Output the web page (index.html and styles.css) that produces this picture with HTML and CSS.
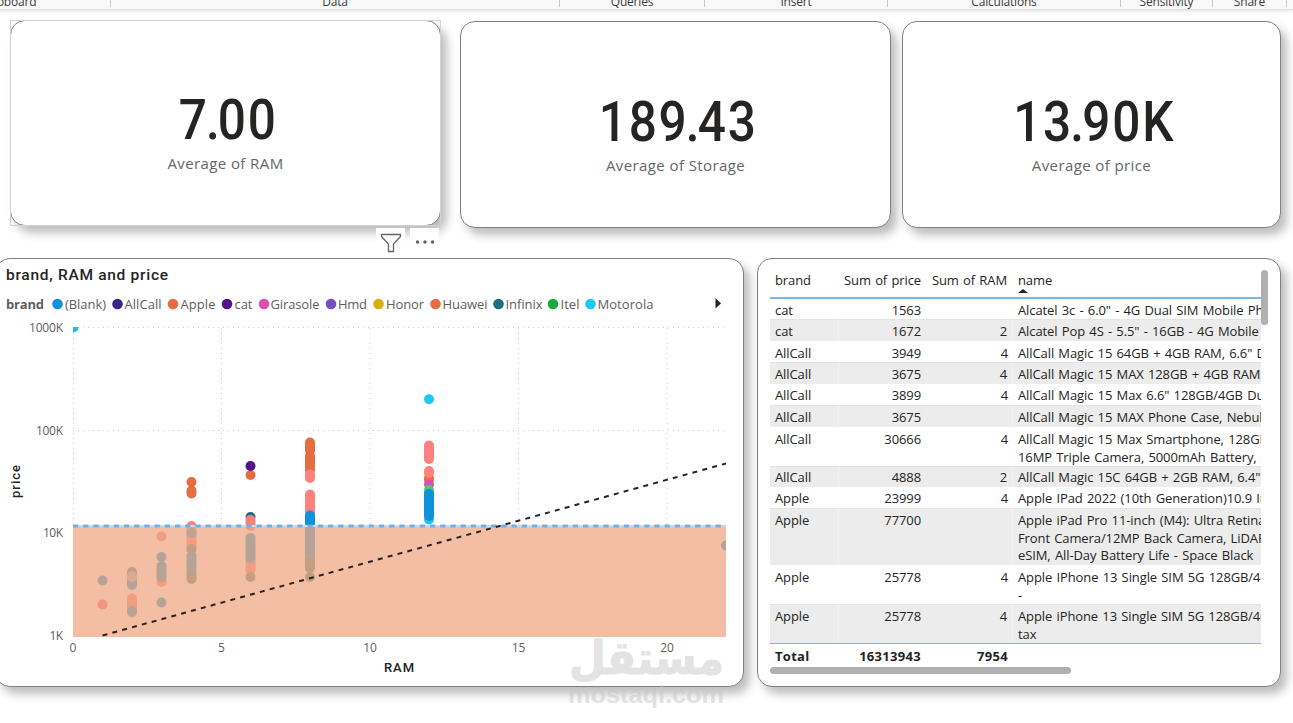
FILE: index.html
```html
<!doctype html>
<html lang="en">
<head>
<meta charset="utf-8">
<link rel="stylesheet" href="styles.css">
<title>Phones report</title>
</head>

<body>

<div class="ribbon">
	<div class="group clipboard">Clipboard</div>
	<div class="group data">Data</div>
	<div class="group queries">Queries</div>
	<div class="group insert">Insert</div>
	<div class="group calc">Calculations</div>
	<div class="group sens">Sensitivity</div>
	<div class="group share">Share</div>
</div>

<div class="cards">
	<div class="card selected">
		<div class="value">7<span class="dot">.</span>00</div>
		<div class="label">Average of RAM</div>
		<div class="tools">
			<span class="tool"><svg width="22" height="20" viewBox="0 0 22 20"><path d="M1.500 1.500h19v2l-7 7.500v7.500h-5v-7.500l-7-7.500z" fill="none" stroke="#666" stroke-width="1.300"/></svg></span>
			<span class="tool"><svg width="20" height="20" viewBox="0 0 20 20" fill="#605e5c"><circle cx="2.500" cy="9" r="1.700"/><circle cx="10" cy="9" r="1.700"/><circle cx="17.500" cy="9" r="1.700"/></svg></span>
		</div>
	</div>
	<div class="card storage">
		<div class="value">189<span class="dot">.</span>43</div>
		<div class="label">Average of Storage</div>
	</div>
	<div class="card price">
		<div class="value">13<span class="dot">.</span>90K</div>
		<div class="label">Average of price</div>
	</div>
</div>

<div class="visuals">
	<div class="panel chart">
		<svg width="744" height="427" viewBox="0 259 744 427">
			<defs>
				<clipPath id="upper"><rect x="73" y="327" width="653" height="198"/></clipPath>
				<clipPath id="lower"><rect x="73" y="527" width="653" height="110"/></clipPath>
			</defs>
			<text class="title" x="6" y="280" textLength="162">brand, RAM and price</text>
			<g class="legend">
				<text class="bold" x="6" y="309" textLength="38">brand</text>
				<circle cx="57.500" cy="304" r="5.300" fill="#0f91dc"/><text x="65" y="309" textLength="41">(Blank)</text>
				<circle cx="117.500" cy="304" r="5.300" fill="#3b2587"/><text x="124.500" y="309" textLength="37">AllCall</text>
				<circle cx="173" cy="304" r="5.300" fill="#e66c42"/><text x="180.500" y="309" textLength="35">Apple</text>
				<circle cx="227" cy="304" r="5.300" fill="#53138a"/><text x="234.500" y="309" textLength="18">cat</text>
				<circle cx="264" cy="304" r="5.300" fill="#d951b0"/><text x="270.500" y="309" textLength="49">Girasole</text>
				<circle cx="331" cy="304" r="5.300" fill="#7350be"/><text x="338" y="309" textLength="29">Hmd</text>
				<circle cx="378.500" cy="304" r="5.300" fill="#d9b109"/><text x="386" y="309" textLength="38">Honor</text>
				<circle cx="435.500" cy="304" r="5.300" fill="#e66c42"/><text x="442.500" y="309" textLength="45">Huawei</text>
				<circle cx="498.500" cy="304" r="5.300" fill="#1f6f7a"/><text x="505.500" y="309" textLength="37">Infinix</text>
				<circle cx="553" cy="304" r="5.300" fill="#1aab40"/><text x="560.500" y="309" textLength="19">Itel</text>
				<circle cx="590.500" cy="304" r="5.300" fill="#22c7f1"/><text x="597.500" y="309" textLength="56">Motorola</text>
			</g>
			<path d="M715.500 298l5.500 5.500-5.500 5z" fill="#252423"/>

			<g class="grid">
				<path d="M73 327.500h653M73 430.500h653M73 533.500h653M73 636h653"/>
				<path d="M73.500 328v308M221.500 328v308M370 328v308M518.500 328v308M667 328v308"/>
			</g>
			<rect x="73" y="526" width="653" height="111" fill="#f3b89c" fill-opacity=".92"/>

			<!-- close points are drawn as one round line -->
			<g class="dots" clip-path="url(#upper)">
				<path d="M73.500 327.500v0" stroke="#22c1d8"/>
				<path d="M191.500 482v0M191.500 490.500v3" stroke="#e66c42"/>
				<path d="M191.500 526v0" stroke="#fd817e"/>
				<path d="M250.500 475v0" stroke="#e66c42"/>
				<path d="M250.500 466v0" stroke="#53138a"/>
				<path d="M250.500 517v0" stroke="#1f6f7a"/>
				<path d="M250.500 520v8" stroke="#fd817e"/>
				<path d="M310 442.500v8M310 456v14M310 462v0" stroke="#e66c42"/>
				<path d="M310 474.500v3.500M310 494.500v20" stroke="#fd817e"/>
				<path d="M310 524v4" stroke="#40bb68"/>
				<path d="M310 515.500v6" stroke="#0f91dc"/>
				<path d="M429 399.300v0" stroke="#22c7f1"/>
				<path d="M429 445.500v13.500" stroke="#fd817e"/>
				<path d="M429 478v2" stroke="#e66c42"/>
				<path d="M429 471v2" stroke="#fd817e"/>
				<path d="M429 484.500v0" stroke="#d951b0"/>
				<path d="M429 490v5" stroke="#50c878"/>
				<path d="M429 519.500v0" stroke="#22c7f1"/>
				<path d="M429 494v22" stroke="#0f91dc"/>
			</g>
			<g class="dots" clip-path="url(#lower)">
				<path d="M102.500 580.500v0" stroke="#b5a398"/>
				<path d="M102.500 604.500v0" stroke="#f29580"/>
				<path d="M132 572v0" stroke="#c49d82"/>
				<path d="M132 580v5" stroke="#b5a398"/>
				<path d="M132 576v1" stroke="#d9aa97"/>
				<path d="M132 598.500v14" stroke="#f09d82"/>
				<path d="M132 611v0.500" stroke="#b5a398"/>
				<path d="M161.500 536.500v0M161.500 582v0" stroke="#f09d82"/>
				<path d="M161.500 577v0" stroke="#c49d82"/>
				<path d="M161.500 557v0M161.500 566v9M161.500 602.500v0" stroke="#b5a398"/>
				<path d="M191.500 526v20" stroke="#f09d82"/>
				<path d="M191.500 549v0M191.500 573v6" stroke="#c49d82"/>
				<path d="M191.500 533v0" stroke="#c0a294"/>
				<path d="M191.500 556v13" stroke="#b5a398"/>
				<path d="M250.500 526v0M250.500 560v10" stroke="#f09d82"/>
				<path d="M250.500 577v0" stroke="#c49d82"/>
				<path d="M250.500 538v20" stroke="#b5a398"/>
				<path d="M310 558v10M310 577v0" stroke="#c49d82"/>
				<path d="M310 526v28" stroke="#b5a398"/>
				<path d="M726 545.500v0" stroke="#b5a398"/>
			</g>
			<path d="M73 526h653" stroke="#c9d9e6" stroke-width="2"/>
			<path d="M73 526h653" stroke="#71afea" stroke-width="3" stroke-dasharray="5.200 5"/>
			<path d="M102.500 635.500L726 463.500" stroke="#252423" stroke-width="2" stroke-dasharray="5 5.200"/>

			<g class="axis">
				<text x="29" y="332" textLength="34">1000K</text>
				<text x="36" y="435" textLength="27">100K</text>
				<text x="43" y="537" textLength="20">10K</text>
				<text x="49.500" y="640" textLength="13.500">1K</text>
				<g text-anchor="middle">
					<text x="73" y="652">0</text>
					<text x="221.500" y="652">5</text>
					<text x="370" y="652">10</text>
					<text x="518.500" y="652">15</text>
					<text x="667" y="652">20</text>
				</g>
			</g>
			<text class="axis-title" x="384" y="672" textLength="30">RAM</text>
			<text class="axis-title" x="-498" y="20" textLength="33" transform="rotate(-90)">price</text>
		</svg>
	</div>

	<div class="panel list">
		<div class="scroller">
			<table>
				<thead>
					<tr><th class="brand">brand</th><th class="num">Sum of price</th><th class="num ram">Sum of RAM</th><th class="name">name<i class="sort"></i></th></tr>
				</thead>
				<tbody>
					<tr class="first"><td>cat</td><td>1563</td><td></td><td>Alcatel 3c - 6.0" - 4G Dual SIM Mobile Phone</td></tr>
					<tr class="tall"><td>cat</td><td>1672</td><td>2</td><td>Alcatel Pop 4S - 5.5" - 16GB - 4G Mobile Phone</td></tr>
					<tr class="low"><td>AllCall</td><td>3949</td><td>4</td><td>AllCall Magic 15 64GB + 4GB RAM, 6.6" Display</td></tr>
					<tr class="tall"><td>AllCall</td><td>3675</td><td>4</td><td>AllCall Magic 15 MAX 128GB + 4GB RAM</td></tr>
					<tr><td>AllCall</td><td>3899</td><td>4</td><td>AllCall Magic 15 Max 6.6" 128GB/4GB Dual</td></tr>
					<tr class="tall"><td>AllCall</td><td>3675</td><td></td><td>AllCall Magic 15 MAX Phone Case, Nebula</td></tr>
					<tr class="two low"><td>AllCall</td><td>30666</td><td>4</td><td>AllCall Magic 15 Max Smartphone, 128GB<br>16MP Triple Camera, 5000mAh Battery, And</td></tr>
					<tr class="high"><td>AllCall</td><td>4888</td><td>2</td><td>AllCall Magic 15C 64GB + 2GB RAM, 6.4" HD</td></tr>
					<tr><td>Apple</td><td>23999</td><td>4</td><td>Apple IPad 2022 (10th Generation)10.9 Inch</td></tr>
					<tr class="three"><td>Apple</td><td>77700</td><td></td><td>Apple iPad Pro 11-inch (M4): Ultra Retina<br>Front Camera/12MP Back Camera, LiDAR<br>eSIM, All-Day Battery Life - Space Black</td></tr>
					<tr class="two lower"><td>Apple</td><td>25778</td><td>4</td><td>Apple IPhone 13 Single SIM 5G 128GB/4GB<br>-</td></tr>
					<tr class="two"><td>Apple</td><td>25778</td><td>4</td><td>Apple iPhone 13 Single SIM 5G 128GB/4GB<br>tax</td></tr>
				</tbody>
				<tfoot>
					<tr><td>Total</td><td>16313943</td><td>7954</td><td></td></tr>
				</tfoot>
			</table>
		</div>
		<div class="hbar"></div>
		<div class="vbar"></div>
	</div>
</div>

<div class="watermark">
	<svg width="160" height="82" viewBox="0 0 160 82">
		<text class="ar" x="79.500" y="39" text-anchor="middle" textLength="155" lengthAdjust="spacingAndGlyphs">مستقل</text>
		<text class="en" x="1" y="68" textLength="156" lengthAdjust="spacingAndGlyphs">mostaql.com</text>
	</svg>
</div>

</body>
</html>
```

FILE: styles.css
```css
*
{
	box-sizing:border-box;
}
body
{
	margin:0;
	width:1293px;
	height:723px;
	overflow:hidden;
	position:relative;
	background:#fff;
	color:#252423;
	font-family:"Open Sans","Liberation Sans",sans-serif;
}
.ribbon
{
	display:flex;
	height:10px;
	margin-left:-90px;
	overflow:hidden;
	background:#f9f9f9;
	border-bottom:1px solid #dedede;
	box-shadow:0 1px 4px rgba(0,0,0,.12);
}
.group
{
	height:7px;
	display:flex;
	justify-content:center;
	align-items:flex-end;
	border-right:1px solid #c8c8c8;
	font-size:12px;
	line-height:11px;
	letter-spacing:-.2px;
	color:#3b3a39;
}
.group.clipboard { width:201px; }
.group.data { width:449px; }
.group.queries { width:145px; }
.group.insert { width:183px; }
.group.calc { width:233px; }
.group.sens { width:92px; }
.group.share { width:74px; }

.cards
{
	display:grid;
	grid-template-columns:430px 431px 379px;
	column-gap:20px;
	padding:11px 0 0 11px;
	height:248px;
	align-items:start;
}
.card,.panel
{
	position:relative;
	background:#fff;
	border:1px solid #808080;
	border-radius:15px;
	box-shadow:6px 7px 10px rgba(0,0,0,.26);
}
.card
{
	height:207px;
	text-align:center;
	padding-top:67px;
}
.card.selected
{
	height:206px;
	margin:-1px 0 0 -1px;
	padding-top:66px;
}
.card.selected:after
{
	content:"";
	position:absolute;
	inset:-1px;
	border:1px solid #d2d2d2;
}
.card.storage
{
	margin-left:-1px;
	width:431px;
}
.card.price
{
	margin-left:-10px;
	width:379px;
}
.value
{
	font:500 55px/66px Roboto,sans-serif;
	letter-spacing:2px;
	padding-left:6px;
	transform:scaleX(.9);
}
.dot
{
	margin-left:-3px;
	letter-spacing:-2px;
}
.label
{
	font-size:15px;
	line-height:20px;
	letter-spacing:.4px;
	color:#666;
}
.tools
{
	position:absolute;
	right:1px;
	top:207px;
	display:flex;
	gap:5px;
	z-index:2;
}
.tool
{
	width:29px;
	height:27px;
	background:#fff;
	display:flex;
	justify-content:center;
	padding-top:5px;
}

.visuals
{
	display:grid;
	grid-template-columns:749px 524px;
	column-gap:13px;
	margin-left:-5px;
}
.panel
{
	height:429px;
}
.chart svg
{
	display:block;
	margin-left:4px;
}
.title
{
	font:500 15.500px Roboto,sans-serif;
	fill:#252423;
}
.legend
{
	font-size:13px;
	fill:#605e5c;
}
.bold
{
	font-weight:bold;
}
.grid path
{
	fill:none;
	stroke:#000;
	stroke-opacity:.2;
	stroke-dasharray:1 4;
}
.dots path
{
	fill:none;
	stroke-width:10;
	stroke-linecap:round;
}
.axis
{
	font-size:12px;
	fill:#605e5c;
}
.axis-title
{
	font:500 13px Roboto,sans-serif;
	fill:#252423;
}

.list
{
	padding:8px 0 0 12px;
}
.scroller
{
	width:491px;
	height:400px;
	overflow:hidden;
}
table
{
	table-layout:fixed;
	width:640px;
	border-collapse:separate;
	border-spacing:0;
	font-size:13px;
	line-height:18px;
	letter-spacing:-.1px;
	word-spacing:1px;
}
th,td
{
	padding:2px 5px 0;
	white-space:nowrap;
	vertical-align:top;
	text-align:left;
}
th
{
	height:32px;
	padding-top:4px;
	font-weight:normal;
	border-bottom:2px solid #72b9f5;
	position:relative;
}
th.brand { width:69px; }
th.num { width:87px; text-align:right; padding-left:0; }
th.ram { width:87px; padding-right:6px; }
.sort
{
	position:absolute;
	left:5px;
	top:22px;
	border:5px solid transparent;
	border-top:0;
	border-bottom:4px solid #252423;
}
td:nth-child(2),td:nth-child(3)
{
	text-align:right;
}
td:nth-child(4)
{
	letter-spacing:-.1px;
}
tbody tr { height:21px; }
tbody .first { height:20px; }
tbody .tall { height:22px; }
tbody .two { height:39px; }
tbody .three { height:57px; }
tbody .low td { padding-top:3px; }
tbody tr:nth-child(even) td
{
	background:#ececec;
	border-top:1px solid #e4e4e4;
	padding-top:2px;
}
tbody tr.high:nth-child(even) td
{
	padding-top:1px;
}
/* the extra pixel hangs out below, so the row keeps its height */
tbody tr.three:nth-child(even) td
{
	padding-top:3px;
	line-height:17.600px;
}
tbody .lower td
{
	padding-top:4px;
	line-height:17.500px;
}
tbody tr:nth-child(even) td:nth-child(1),tbody tr:nth-child(even) td:nth-child(3)
{
	border-right:1px solid #f2f2f2;
}
tfoot td
{
	height:22px;
	padding-top:3px;
	border-top:1px solid #72b9f5;
	font-weight:bold;
	letter-spacing:.3px;
}
.hbar
{
	width:301px;
	height:7px;
	border-radius:4px;
	background:#b0b0b0;
}
.vbar
{
	position:absolute;
	right:12px;
	top:11px;
	width:7px;
	height:55px;
	border-radius:4px;
	background:#b0b0b0;
}

.watermark
{
	position:absolute;
	left:567px;
	top:635px;
	opacity:.5;
}
.ar
{
	font:bold 46px "DejaVu Sans",sans-serif;
	fill:#c8c8c8;
	stroke:#c8c8c8;
	stroke-width:1px;
}
.en
{
	font:bold 23px "Liberation Sans",sans-serif;
	fill:#c8c8c8;
}
```
